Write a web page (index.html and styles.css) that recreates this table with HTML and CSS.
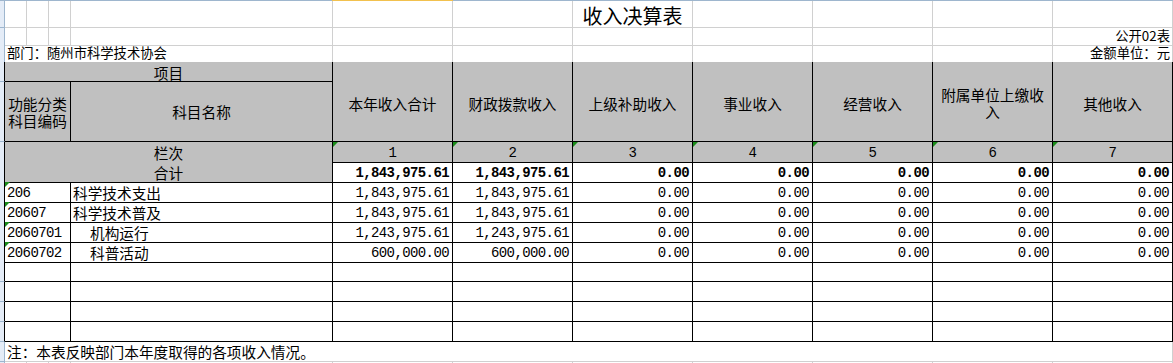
FILE: index.html
```html
<!DOCTYPE html>
<html lang="zh-CN">
<head>
<meta charset="utf-8">
<title>收入决算表</title>
<link rel="stylesheet" href="styles.css">
</head>
<body>
<div class="sheet">
  <div class="topline"><span class="tl-a"></span><span class="tl-sel"></span><span class="tl-b"></span></div>

  <div class="row h27">
    <div class="bar"></div>
    <div class="c"></div><div class="c"></div><div class="c"></div><div class="c"></div>
    <div class="c"></div><div class="c"></div>
    <div class="c title">收入决算表</div>
    <div class="c"></div><div class="c"></div><div class="c"></div><div class="c"></div>
  </div>

  <div class="row h17">
    <div class="bar"></div>
    <div class="c"></div><div class="c"></div><div class="c"></div><div class="c"></div>
    <div class="c"></div><div class="c"></div><div class="c"></div><div class="c"></div><div class="c"></div><div class="c"></div>
    <div class="c meta right">公开02表</div>
  </div>

  <div class="row h17 tabletop">
    <div class="bar"></div>
    <div class="c meta span-ad">部门：随州市科学技术协会</div>
    <div class="c"></div><div class="c"></div><div class="c"></div><div class="c"></div><div class="c"></div><div class="c"></div>
    <div class="c meta right">金额单位：元</div>
  </div>

  <div class="head">
    <div class="bar dark hb1"></div>
    <div class="t g ctr hx-item">项目</div>
    <div class="t g ctr hx-col">本年收入合计</div>
    <div class="t g ctr hx-col">财政拨款收入</div>
    <div class="t g ctr hx-col">上级补助收入</div>
    <div class="t g ctr hx-col">事业收入</div>
    <div class="t g ctr hx-col">经营收入</div>
    <div class="t g ctr hx-col wrap">附属单位上缴收入</div>
    <div class="t g ctr hx-col">其他收入</div>
    <div class="bar dark hb2"></div>
    <div class="t g ctr wrap hx-code">功能分类科目编码</div>
    <div class="t g ctr hx-name">科目名称</div>
  </div>

  <div class="row h20">
    <div class="bar dark"></div>
    <div class="t g ctr span-ad">栏次</div>
    <div class="t g ctr mono tri">1</div>
    <div class="t g ctr mono tri">2</div>
    <div class="t g ctr mono tri">3</div>
    <div class="t g ctr mono tri">4</div>
    <div class="t g ctr mono tri">5</div>
    <div class="t g ctr mono tri">6</div>
    <div class="t g ctr mono tri">7</div>
  </div>

  <div class="row h20">
    <div class="bar dark"></div>
    <div class="t g ctr span-ad">合计</div>
    <div class="t num bold">1,843,975.61</div>
    <div class="t num bold">1,843,975.61</div>
    <div class="t num bold">0.00</div>
    <div class="t num bold">0.00</div>
    <div class="t num bold">0.00</div>
    <div class="t num bold">0.00</div>
    <div class="t num bold">0.00</div>
  </div>

  <div class="row h20">
    <div class="bar dark"></div>
    <div class="t code mono tri span-ac">206</div>
    <div class="t name">科学技术支出</div>
    <div class="t num">1,843,975.61</div>
    <div class="t num">1,843,975.61</div>
    <div class="t num">0.00</div>
    <div class="t num">0.00</div>
    <div class="t num">0.00</div>
    <div class="t num">0.00</div>
    <div class="t num">0.00</div>
  </div>

  <div class="row h20">
    <div class="bar dark"></div>
    <div class="t code mono tri span-ac">20607</div>
    <div class="t name">科学技术普及</div>
    <div class="t num">1,843,975.61</div>
    <div class="t num">1,843,975.61</div>
    <div class="t num">0.00</div>
    <div class="t num">0.00</div>
    <div class="t num">0.00</div>
    <div class="t num">0.00</div>
    <div class="t num">0.00</div>
  </div>

  <div class="row h20">
    <div class="bar dark"></div>
    <div class="t code mono tri span-ac">2060701</div>
    <div class="t name indent">机构运行</div>
    <div class="t num">1,243,975.61</div>
    <div class="t num">1,243,975.61</div>
    <div class="t num">0.00</div>
    <div class="t num">0.00</div>
    <div class="t num">0.00</div>
    <div class="t num">0.00</div>
    <div class="t num">0.00</div>
  </div>

  <div class="row h20">
    <div class="bar dark"></div>
    <div class="t code mono tri span-ac">2060702</div>
    <div class="t name indent">科普活动</div>
    <div class="t num">600,000.00</div>
    <div class="t num">600,000.00</div>
    <div class="t num">0.00</div>
    <div class="t num">0.00</div>
    <div class="t num">0.00</div>
    <div class="t num">0.00</div>
    <div class="t num">0.00</div>
  </div>

  <div class="row h20">
    <div class="bar dark"></div>
    <div class="t span-ac"></div><div class="t"></div>
    <div class="t"></div><div class="t"></div><div class="t"></div><div class="t"></div><div class="t"></div><div class="t"></div><div class="t"></div>
  </div>
  <div class="row h20">
    <div class="bar dark"></div>
    <div class="t span-ac"></div><div class="t"></div>
    <div class="t"></div><div class="t"></div><div class="t"></div><div class="t"></div><div class="t"></div><div class="t"></div><div class="t"></div>
  </div>
  <div class="row h20">
    <div class="bar dark"></div>
    <div class="t span-ac"></div><div class="t"></div>
    <div class="t"></div><div class="t"></div><div class="t"></div><div class="t"></div><div class="t"></div><div class="t"></div><div class="t"></div>
  </div>
  <div class="row h20">
    <div class="bar dark"></div>
    <div class="t span-ac"></div><div class="t"></div>
    <div class="t"></div><div class="t"></div><div class="t"></div><div class="t"></div><div class="t"></div><div class="t"></div><div class="t"></div>
  </div>

  <div class="row h20">
    <div class="bar"></div>
    <div class="c note span-all">注：本表反映部门本年度取得的各项收入情况。</div>
  </div>

  <div class="row tail">
    <div class="bar nob"></div>
    <div class="c"></div><div class="c"></div><div class="c"></div><div class="c"></div>
    <div class="c"></div><div class="c"></div><div class="c"></div><div class="c"></div><div class="c"></div><div class="c"></div><div class="c"></div>
  </div>
</div>
</body>
</html>
```

FILE: styles.css
```css
* {
  box-sizing: border-box;
}

html,
body {
  margin: 0;
  padding: 0;
  background: #ffffff;
}

body {
  width: 1173px;
  height: 363px;
  overflow: hidden;
  font-family: "Noto Sans CJK SC", "Noto Sans", sans-serif;
  font-size: 14.67px;
  color: #000000;
}

.sheet {
  display: flex;
  flex-direction: column;
  width: 1173px;
}

/* top edge of the column header strip */
.topline {
  display: flex;
  height: 1px;
  flex: none;
}

.tl-a {
  width: 332px;
  background: #9eb6ce;
}

.tl-sel {
  width: 121px;
  background: #f2c14e;
}

.tl-b {
  flex: 1;
  background: #9eb6ce;
}

/* shared column template: row-header strip + A B C D + 7 money columns */
.row,
.head {
  display: grid;
  grid-template-columns: 5px 22px 22px 22px 262px repeat(7, 120px);
  flex: none;
}

.h27 { height: 27px; }
.h17 { height: 17px; }
.h20 { height: 20px; }
.tail { height: 1px; overflow: hidden; }

.head {
  grid-template-rows: 20px 60px;
  height: 80px;
}

/* row header strip on the left */
.bar {
  background: #e4ecf7;
  border-right: 1px solid #9eb6ce;
  border-bottom: 1px solid #9eb6ce;
}

.bar.dark {
  border-right-color: #000000;
}

.bar.nob,
.tail .c {
  border-bottom: 0;
}

/* plain sheet cell with light gridlines */
.c {
  border-right: 1px solid #d0d0d0;
  border-bottom: 1px solid #d0d0d0;
  display: flex;
  align-items: flex-end;
  white-space: nowrap;
  min-width: 0;
  line-height: 16px;
}

.tabletop .c {
  border-bottom-color: #000000;
}

/* table cell with black borders */
.t {
  position: relative;
  border-right: 1px solid #000000;
  border-bottom: 1px solid #000000;
  display: flex;
  align-items: center;
  white-space: nowrap;
  min-width: 0;
  line-height: 17px;
  padding-top: 1px;
}

.g {
  background: #c0c0c0;
}

.ctr {
  justify-content: center;
  text-align: center;
}

.wrap {
  white-space: normal;
  padding: 4px 4px 0;
}

.title {
  justify-content: center;
  align-items: center;
  font-size: 20px;
  padding-top: 4px;
  overflow: visible;
}

.meta {
  font-size: 13.33px;
  padding: 0 2px 1px 2px;
}

.right {
  justify-content: flex-end;
}

.span-ad {
  grid-column: 2 / 6;
}

.span-ac {
  grid-column: 2 / 5;
}

.span-all {
  grid-column: 2 / 13;
}

/* header block placement */
.hb1 { grid-column: 1; grid-row: 1; }
.hb2 { grid-column: 1; grid-row: 2; }
.hx-item { grid-column: 2 / 6; grid-row: 1; }
.hx-col { grid-row: 1 / 3; padding-top: 3px; }
.hx-code { grid-column: 2 / 5; grid-row: 2; padding: 1px 2px 0; }
.hx-name { grid-column: 5; grid-row: 2; padding-top: 0; }

.mono,
.num {
  font-family: "Liberation Mono", "DejaVu Sans Mono", monospace;
  font-size: 14px;
  letter-spacing: -0.6px;
  padding-top: 3px;
}

.num {
  justify-content: flex-end;
  padding-right: 3px;
}

.bold {
  font-weight: bold;
}

.code {
  padding-left: 2px;
}

.name {
  padding-left: 2px;
}

.name.indent {
  padding-left: 19px;
}

.note {
  padding-left: 2px;
  align-items: center;
}

/* green "number stored as text" corner mark */
.tri::before {
  content: "";
  position: absolute;
  left: 0;
  top: 0;
  width: 0;
  height: 0;
  border-top: 5px solid #1a8c1a;
  border-right: 5px solid transparent;
}
```
